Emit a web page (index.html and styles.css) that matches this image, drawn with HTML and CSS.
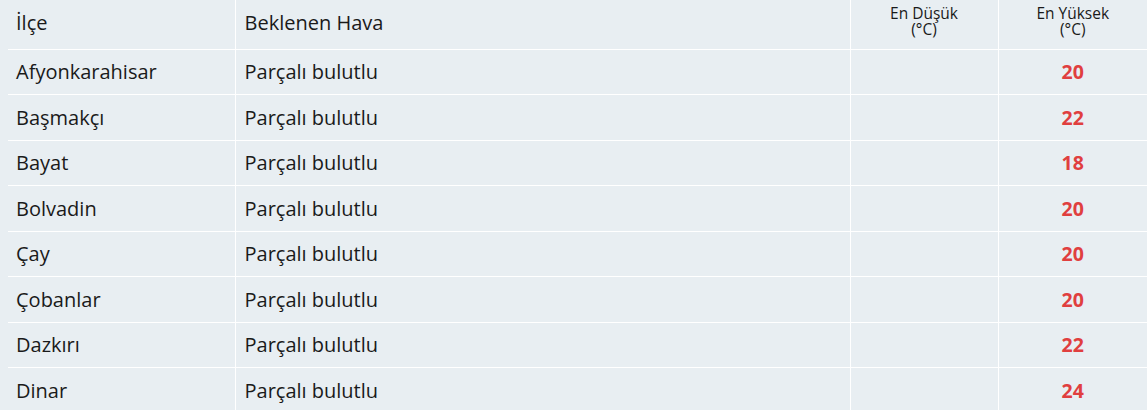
FILE: index.html
```html
<!DOCTYPE html>
<html lang="tr">
<head>
<meta charset="utf-8">
<link rel="stylesheet" href="styles.css">
</head>
<body>
<table class="weather">
  <colgroup>
    <col class="c1"><col class="c2"><col class="c3"><col class="c4">
  </colgroup>
  <thead>
    <tr>
      <th class="name">İlçe</th>
      <th class="name">Beklenen Hava</th>
      <th class="temp">En Düşük<br>(°C)</th>
      <th class="temp">En Yüksek<br>(°C)</th>
    </tr>
  </thead>
  <tbody>
    <tr><td>Afyonkarahisar</td><td>Parçalı bulutlu</td><td class="num"></td><td class="num hi">20</td></tr>
    <tr><td>Başmakçı</td><td>Parçalı bulutlu</td><td class="num"></td><td class="num hi">22</td></tr>
    <tr><td>Bayat</td><td>Parçalı bulutlu</td><td class="num"></td><td class="num hi">18</td></tr>
    <tr><td>Bolvadin</td><td>Parçalı bulutlu</td><td class="num"></td><td class="num hi">20</td></tr>
    <tr><td>Çay</td><td>Parçalı bulutlu</td><td class="num"></td><td class="num hi">20</td></tr>
    <tr><td>Çobanlar</td><td>Parçalı bulutlu</td><td class="num"></td><td class="num hi">20</td></tr>
    <tr><td>Dazkırı</td><td>Parçalı bulutlu</td><td class="num"></td><td class="num hi">22</td></tr>
    <tr><td>Dinar</td><td>Parçalı bulutlu</td><td class="num"></td><td class="num hi">24</td></tr>
  </tbody>
</table>
</body>
</html>
```
FILE: styles.css
```css
html, body {
  margin: 0;
  padding: 0;
  background: #e8eef2;
}
body {
  font-family: "Open Sans", "Liberation Sans", sans-serif;
  color: #1a1a1a;
}
.weather {
  margin-left: 8px;
  width: 1139px;
  border-collapse: collapse;
  table-layout: fixed;
}
.c1 { width: 227px; }
.c2 { width: 615px; }
.c3 { width: 148px; }
.c4 { width: 149px; }
.weather th,
.weather td {
  border: 1px solid #ffffff;
  padding: 0 8px;
}
.weather tr > :first-child { border-left: none; }
.weather tr > :last-child { border-right: none; }
.weather tr > :nth-child(2) { padding-left: 9px; }
.weather thead th { border-top: none; }
.weather tbody tr:last-child td { border-bottom: none; }
.weather thead tr { height: 49px; }
.weather th {
  font-weight: normal;
}
.weather th.name {
  text-align: left;
  font-size: 20px;
  vertical-align: middle;
  padding-bottom: 4px;
}
.weather th.temp {
  font-size: 15.5px;
  line-height: 16px;
  text-align: center;
  vertical-align: top;
  padding-top: 5px;
}
.weather tbody tr { height: 45.5px; }
.weather td {
  font-size: 20px;
}
.weather td.num { text-align: center; }
.weather td.hi {
  color: #e03f3f;
  font-weight: bold;
  font-size: 19.5px;
}
```
